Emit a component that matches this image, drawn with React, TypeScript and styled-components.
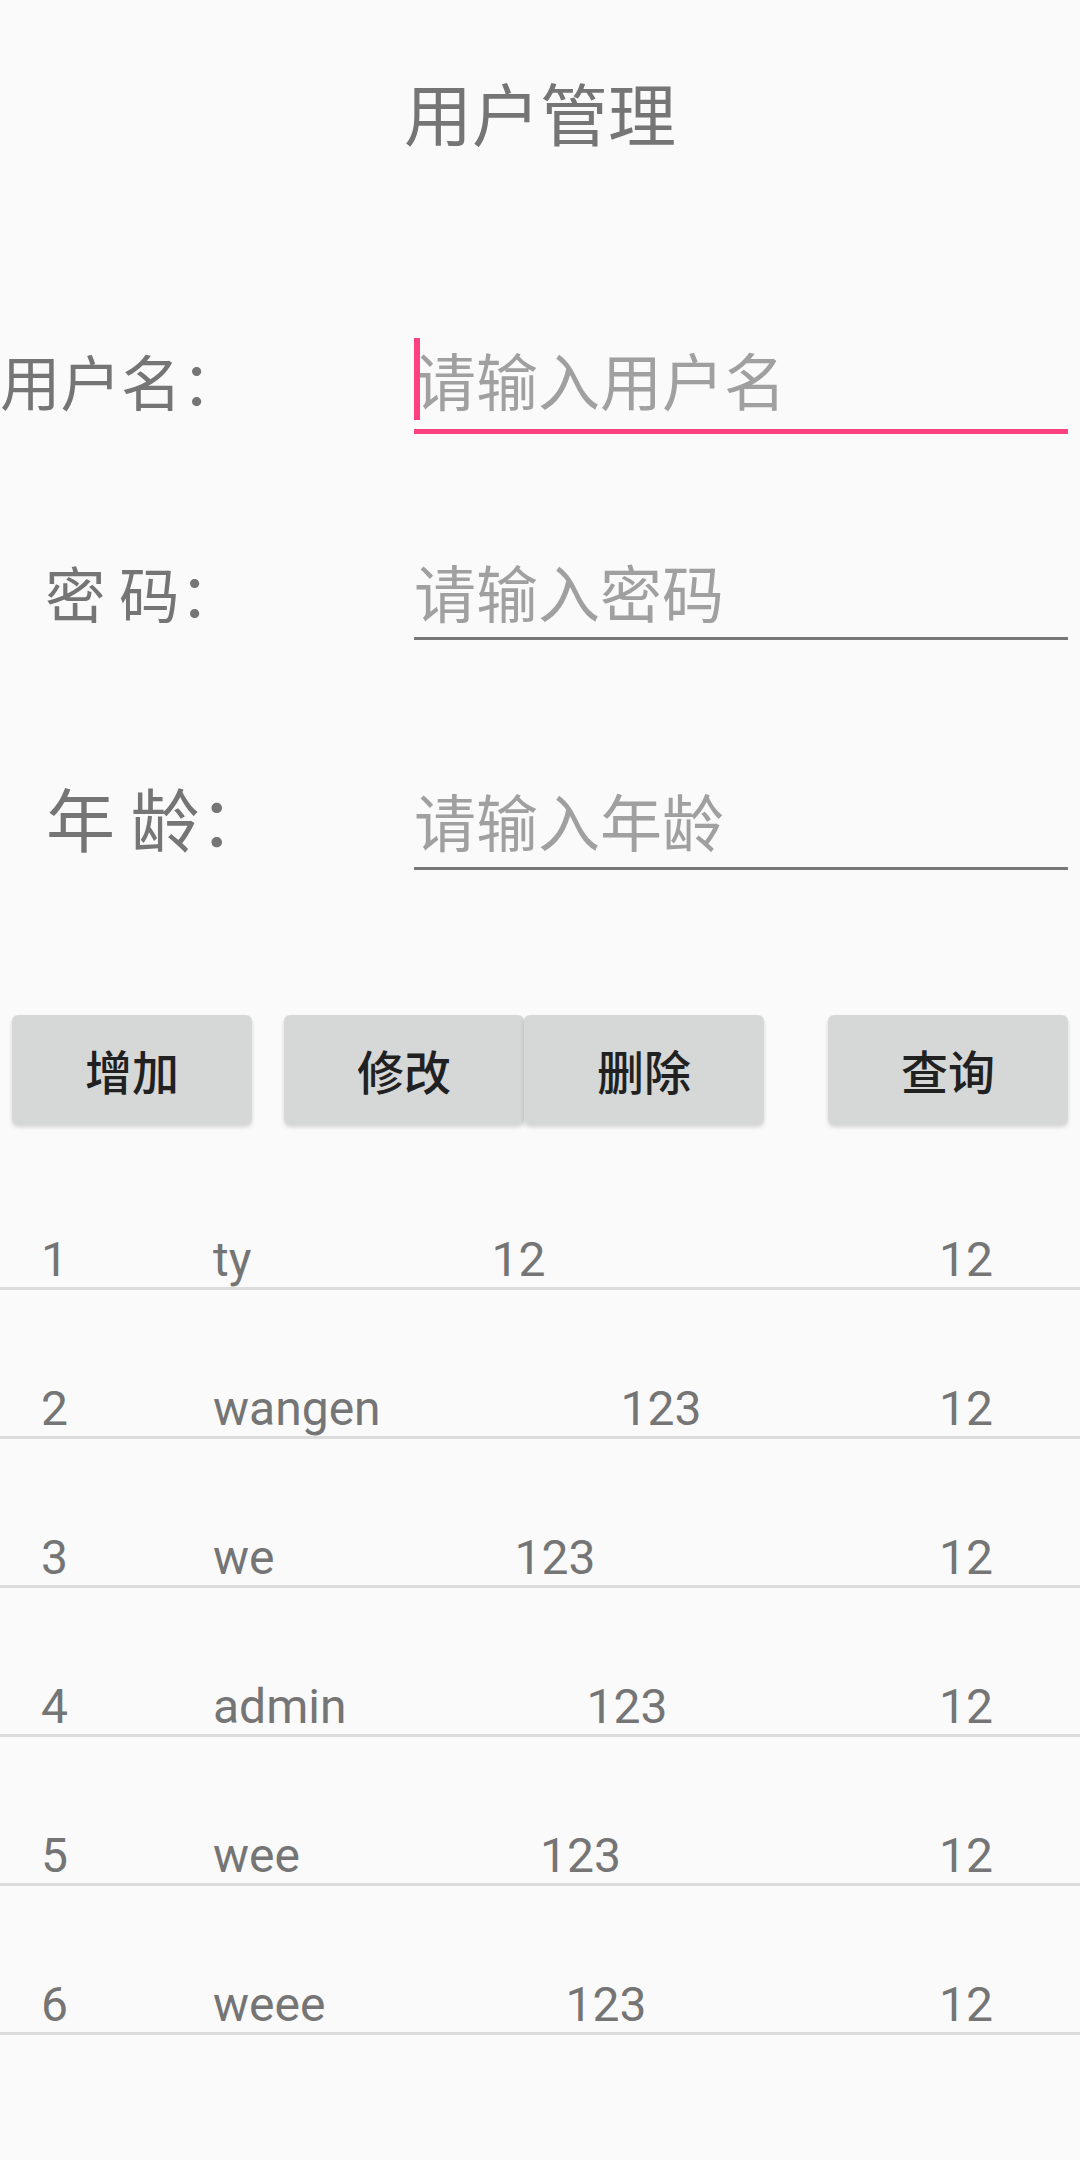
import styled, { createGlobalStyle } from 'styled-components'

const GlobalStyle = createGlobalStyle`
  html, body {
    margin: 0;
    padding: 0;
    background: #fafafa;
  }
  body {
    font-family: 'Noto Sans CJK SC', 'Noto Sans', sans-serif;
  }
`

const cjk = `'Noto Sans CJK SC', 'Noto Sans', sans-serif`

const Page = styled.div`
  width: 1080px;
  min-height: 2160px;
  box-sizing: border-box;
  padding-top: 78px;
  background: #fafafa;
`

const Title = styled.h1`
  margin: 0;
  font-family: ${cjk};
  font-size: 68px;
  line-height: 68px;
  font-weight: 400;
  color: #757575;
  text-align: center;
`

const FieldRow = styled.div<{ $top: number }>`
  display: flex;
  align-items: baseline;
  margin-top: ${p => p.$top}px;
`

const Label = styled.label<{ $indent: number; $size: number }>`
  flex: none;
  width: 414px;
  box-sizing: border-box;
  padding-left: ${p => p.$indent}px;
  font-family: ${cjk};
  font-size: ${p => p.$size}px;
  line-height: ${p => p.$size}px;
  color: #757575;
  white-space: pre;
`

const EditText = styled.div<{ $focused?: boolean }>`
  position: relative;
  flex: none;
  width: 654px;
  box-sizing: border-box;
  padding: 0 0 ${p => (p.$focused ? 19 : 16)}px 0;
  border-bottom: ${p => (p.$focused ? '5px solid #ff4081' : '3px solid #777777')};
  font-family: ${cjk};
  font-size: 62px;
  line-height: 60.5px;
  color: #a0a0a0;

  ${p =>
    p.$focused &&
    `
    &::before {
      content: '';
      position: absolute;
      left: 0;
      top: -11px;
      width: 6px;
      height: 82px;
      background: #ff4081;
    }
  `}
`

const Toolbar = styled.div`
  display: flex;
  margin-top: 145px;
`

const ActionButton = styled.button<{ $offset: number }>`
  flex: none;
  width: 240px;
  height: 109px;
  margin-left: ${p => p.$offset}px;
  padding: 0;
  border: none;
  border-radius: 6px;
  background: #d6d7d7;
  box-shadow: 0 3px 4px rgba(0, 0, 0, 0.16);
  font-family: ${cjk};
  font-size: 47px;
  font-weight: 500;
  color: #212121;
`

const UserList = styled.div`
  margin-top: 17px;
`

const Row = styled.div`
  display: flex;
  align-items: flex-end;
  height: 149px;
  box-sizing: border-box;
  padding-bottom: 3px;
  border-bottom: 3px solid #dcdcdc;
  font-family: Roboto, 'Noto Sans', sans-serif;
  font-size: 48px;
  line-height: 48px;
  color: #757575;
`

const IdCell = styled.span`
  flex: none;
  width: 172px;
  padding-left: 41px;
`

const NameCell = styled.span``

const PassCell = styled.span`
  margin-left: 240px;
`

const AgeCell = styled.span`
  margin-left: auto;
  margin-right: 87px;
`

const users = [
  { id: 1, name: 'ty', pass: '12', age: '12' },
  { id: 2, name: 'wangen', pass: '123', age: '12' },
  { id: 3, name: 'we', pass: '123', age: '12' },
  { id: 4, name: 'admin', pass: '123', age: '12' },
  { id: 5, name: 'wee', pass: '123', age: '12' },
  { id: 6, name: 'weee', pass: '123', age: '12' },
]

const actions = [
  { text: '增加', offset: 12 },
  { text: '修改', offset: 32 },
  { text: '删除', offset: 0 },
  { text: '查询', offset: 64 },
]

export default function App() {
  return (
    <Page>
      <GlobalStyle />
      <Title>用户管理</Title>

      <FieldRow $top={203}>
        <Label $indent={0} $size={60.5}>用户名：</Label>
        <EditText $focused>请输入用户名</EditText>
      </FieldRow>

      <FieldRow $top={127}>
        <Label $indent={45} $size={60.5}>密 码：</Label>
        <EditText>请输入密码</EditText>
      </FieldRow>

      <FieldRow $top={143}>
        <Label $indent={46} $size={69}>年 龄：</Label>
        <EditText>请输入年龄</EditText>
      </FieldRow>

      <Toolbar>
        {actions.map(a => (
          <ActionButton key={a.text} $offset={a.offset}>
            {a.text}
          </ActionButton>
        ))}
      </Toolbar>

      <UserList>
        {users.map(u => (
          <Row key={u.id}>
            <IdCell>{u.id}</IdCell>
            <NameCell>{u.name}</NameCell>
            <PassCell>{u.pass}</PassCell>
            <AgeCell>{u.age}</AgeCell>
          </Row>
        ))}
      </UserList>
    </Page>
  )
}
